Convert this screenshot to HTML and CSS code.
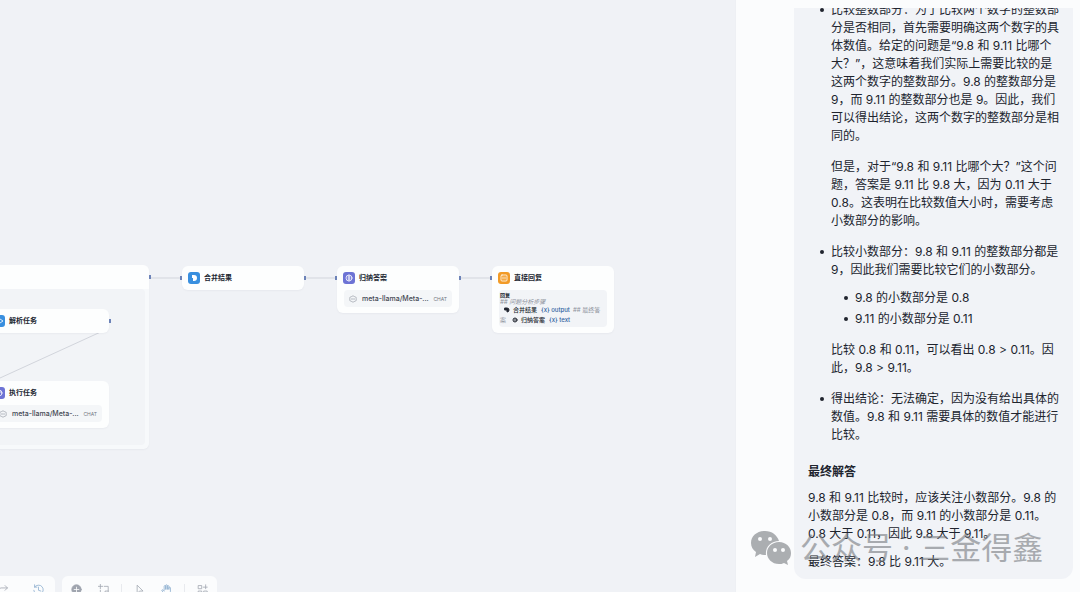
FILE: index.html
```html
<!DOCTYPE html>
<html lang="zh-CN">
<head>
<meta charset="utf-8">
<title>工作流</title>
<link rel="stylesheet" href="styles.css">
</head>
<body>
<div class="app">
  <main class="canvas">
    <svg class="edges" aria-hidden="true">
      <path d="M149 278H182M304 278H337M459 278H492"/>
    </svg>

    <section class="node group">
      <div class="group-body">
        <svg class="edges" aria-hidden="true"><path d="M0 89L105 41"/></svg>
      </div>
      <i class="port out"></i>
    </section>

    <section class="node parse">
      <header class="head">
        <svg class="icon blue" viewBox="0 0 12 12"><path d="M2 6h2l1-2 1 4M7 4l3 2-3 2"/></svg>
        <h2>解析任务</h2>
      </header>
      <i class="port out"></i>
    </section>

    <section class="node execute">
      <header class="head">
        <svg class="icon indigo" viewBox="0 0 12 12"><circle cx="6" cy="6" r="3"/><path d="M6 3v6M4 5h4"/></svg>
        <h2>执行任务</h2>
      </header>
      <div class="model">
        <svg class="cube" viewBox="0 0 10 10"><path d="M5 1l4 2v4L5 9 1 7V3zM3 5h4"/></svg>
        <span class="name">meta-llama/Meta-...</span><span class="tag">CHAT</span>
      </div>
    </section>

    <section class="node merge">
      <header class="head">
        <svg class="icon blue" viewBox="0 0 12 12"><path class="fill" d="M4 3h2a3 3 0 0 1 0 6H5V6H4z"/></svg>
        <h2>合并结果</h2>
      </header>
      <i class="port in"></i><i class="port out"></i>
    </section>

    <section class="node summary">
      <header class="head">
        <svg class="icon indigo" viewBox="0 0 12 12"><circle cx="6" cy="6" r="3"/><path d="M6 3v6M5 5h2M5 7h2"/></svg>
        <h2>归纳答案</h2>
      </header>
      <div class="model">
        <svg class="cube" viewBox="0 0 10 10"><path d="M5 1l4 2v4L5 9 1 7V3zM3 5h4"/></svg>
        <span class="name">meta-llama/Meta-...</span><span class="tag">CHAT</span>
      </div>
      <i class="port in"></i><i class="port out"></i>
    </section>

    <section class="node reply">
      <header class="head">
        <svg class="icon orange" viewBox="0 0 12 12"><rect x="3" y="3" width="6" height="6" rx="1"/><path d="M5 5v2M7 5v2"/></svg>
        <h2>直接回复</h2>
      </header>
      <div class="answer">
        <strong>回复</strong>
        <p class="muted">## 问题分析步骤</p>
        <p class="row indent"><svg class="mini" viewBox="0 0 6 6"><path class="solid" d="M1 1h2a2 2 0 0 1 0 4V3H1z"/></svg><b>合并结果</b><span class="var">{x} output</span><span class="muted">## 最终答</span></p>
        <p class="row"><span class="muted">案</span><svg class="mini gap" viewBox="0 0 6 6"><circle cx="3" cy="3" r="2"/><path d="M3 2v2"/></svg><b>归纳答案</b><span class="var">{x} text</span></p>
      </div>
      <i class="port in"></i>
    </section>

    <div class="toolbar">
      <div class="tools history">
        <button aria-label="重做"><svg viewBox="0 0 14 14"><path d="M1 11V8a3 3 0 0 1 3-3h8M9 2l3 3-3 3"/></svg></button>
        <button aria-label="历史记录"><svg class="hist" viewBox="0 0 14 14"><path d="M2 4a6 6 0 1 1-1 4M2 1v3h3M7 4v4l3 1"/></svg></button>
      </div>
      <div class="tools">
        <button aria-label="添加节点"><svg viewBox="0 0 14 14"><circle class="solid" cx="7" cy="7" r="6"/><path class="plus" d="M7 4v6M4 7h6"/></svg></button>
        <button aria-label="添加注释"><svg viewBox="0 0 14 14"><path d="M3 0v6M0 3h6M8 3h5v7l-3 3H3V8M13 9h-4v4"/></svg></button>
        <span class="sep"></span>
        <button aria-label="指针"><svg viewBox="0 0 14 14"><path d="M4 2v10l3-3h4z"/></svg></button>
        <button class="on" aria-label="手形"><svg viewBox="0 0 14 14"><path d="M4 8V3a1 1 0 0 1 2 0v4V2a1 1 0 0 1 2 0v5-4a1 1 0 0 1 2 0v4-2a1 1 0 0 1 2 0v4c0 3-1 4-4 4S3 12 1 8c0-1 2-1 3 1"/></svg></button>
        <span class="sep"></span>
        <button aria-label="整理"><svg viewBox="0 0 14 14"><path d="M2 2h4v4H2zM2 9h4v4H2zM9 9h4v4H9zM11 1v5M8 4h5"/></svg></button>
      </div>
    </div>
  </main>

  <aside class="chat">
    <div class="scroll">
      <article class="bubble">
        <ul class="steps">
          <li>
            <p>比较整数部分：为了比较两个数字的整数部分是否相同，首先需要明确这两个数字的具体数值。给定的问题是“9.8 和 9.11 比哪个大？”，这意味着我们实际上需要比较的是这两个数字的整数部分。9.8 的整数部分是 9，而 9.11 的整数部分也是 9。因此，我们可以得出结论，这两个数字的整数部分是相同的。</p>
            <p>但是，对于“9.8 和 9.11 比哪个大？”这个问题，答案是 9.11 比 9.8 大，因为 0.11 大于 0.8。这表明在比较数值大小时，需要考虑小数部分的影响。</p>
          </li>
          <li>
            <p>比较小数部分：9.8 和 9.11 的整数部分都是 9，因此我们需要比较它们的小数部分。</p>
            <ul class="sub">
              <li>9.8 的小数部分是 0.8</li>
              <li>9.11 的小数部分是 0.11</li>
            </ul>
            <p>比较 0.8 和 0.11，可以看出 0.8 &gt; 0.11。因此，9.8 &gt; 9.11。</p>
          </li>
          <li>
            <p>得出结论：无法确定，因为没有给出具体的数值。9.8 和 9.11 需要具体的数值才能进行比较。</p>
          </li>
        </ul>
        <h3>最终解答</h3>
        <p>9.8 和 9.11 比较时，应该关注小数部分。9.8 的小数部分是 0.8，而 9.11 的小数部分是 0.11。0.8 大于 0.11，因此 9.8 大于 9.11。</p>
        <p class="final">最终答案：9.8 比 9.11 大。</p>
      </article>
    </div>
    <div class="watermark">
      <svg viewBox="0 0 42 36" aria-hidden="true"><path fill-rule="evenodd" d="M15 1C7 1 1 6 1 13c0 4 2 7 5 9l-1 5 5-3c2 1 4 1 6 1-1-8 5-14 13-14C27 5 22 1 15 1zM10 7a2 2 0 1 1 0 4 2 2 0 0 1 0-4zm10 0a2 2 0 1 1 0 4 2 2 0 0 1 0-4z"/><path fill-rule="evenodd" d="M29 12c-7 0-12 5-12 11s5 11 12 11c2 0 3 0 5-1l4 2-1-4c3-2 4-5 4-8 0-6-5-11-12-11zm-4 6a2 2 0 1 1 0 4 2 2 0 0 1 0-4zm8 0a2 2 0 1 1 0 4 2 2 0 0 1 0-4z"/></svg>
      <span>公众号 · 三金得鑫</span>
    </div>
  </aside>
</div>
</body>
</html>
```
FILE: styles.css
```css
* { box-sizing: border-box; }
body, h2, h3, p, ul { margin: 0; padding: 0; }
body { font-family: Inter, "Noto Sans CJK SC", sans-serif; color: #20242e; background: #f0f2f6; }
svg { fill: none; stroke: currentColor; stroke-linecap: round; stroke-linejoin: round; }

.app { display: flex; height: 100vh; overflow: hidden; }
.canvas { position: relative; flex: 1; min-width: 0; overflow: hidden; background: #f0f2f6; }
.edges { position: absolute; inset: 0; width: 100%; height: 100%; color: #d2d5dc; }

/* workflow nodes */
.node { position: absolute; width: 122px; padding: 6px 7px; border-radius: 6px; background: #fdfefe; box-shadow: 0 1px 2px #1018280a; }
.group { left: -160px; top: 265px; width: 309px; height: 184px; padding: 24px 4px 4px; background: linear-gradient(#fdfefe 24px, #f7f9fb 24px); }
.group-body { position: relative; height: 100%; border-radius: 4px; background: #f2f4f7; }
.group-body .edges { left: 156px; width: 150px; }
.parse { left: -13px; top: 309px; }
.execute { left: -13px; top: 381px; }
.merge { left: 182px; top: 266px; }
.summary { left: 337px; top: 266px; }
.reply { left: 492px; top: 266px; }

.head { display: flex; align-items: center; gap: 4px; height: 12px; margin-left: -1px; }
.head h2 { font-size: 7px; line-height: 12px; font-weight: 700; color: #222731; }
.icon { width: 12px; height: 12px; border-radius: 3px; color: #ffffffcc; stroke-width: 1; }
.blue { background: #398fdf; }
.indigo { background: #6d73d5; }
.orange { background: #f29b27; }
.fill { fill: #fff; stroke: none; }

.port { position: absolute; top: 10px; width: 2px; height: 4px; background: #6d83b8; }
.port.in { left: -2px; }
.port.out { right: -2px; }

.model { display: flex; align-items: center; gap: 4px; height: 17px; margin-top: 6px; padding: 0 5px; border-radius: 4px; background: #f4f6f8; }
.model .cube { width: 8px; height: 8px; margin-right: 1px; color: #a5a9b2; stroke-dasharray: 2 1; }
.name { flex: 1; font-size: 7px; font-weight: 500; white-space: nowrap; color: #434853; }
.tag { font-size: 5px; color: #737882; }

.answer { margin-top: 6px; padding: 2px 1px; border-radius: 4px; background: #f2f4f7; font-size: 6px; line-height: 10px; white-space: nowrap; }
.answer strong { display: block; font-size: 5px; line-height: 6px; }
.answer > .muted { line-height: 7px; font-style: italic; }
.answer .muted { color: #8d929c; }
.row { display: flex; align-items: center; gap: 3px; }
.row b { font-weight: 500; }
.row .var { margin-left: 1px; font-weight: 500; }
.indent { padding-left: 4px; }
.mini { width: 6px; height: 6px; }
.mini.gap { margin-left: 3px; }
.solid { fill: currentColor; }
.var { color: #2f629f; }

/* bottom toolbar */
.toolbar { position: absolute; left: -20px; bottom: -10px; display: flex; gap: 7px; }
.tools { display: flex; align-items: center; gap: 8px; height: 26px; padding: 0 5px; border-radius: 6px; background: #fbfcfd; }
.tools.history { gap: 16px; padding: 0 7px 0 14px; }
.tools button { display: grid; place-items: center; width: 19px; height: 20px; padding: 0; border: 0; background: none; color: #a0a5af; }
.tools svg { width: 11px; height: 11px; }
.tools .hist, .tools .on { color: #8badcf; }
.plus { stroke: #fff; }
.sep { width: 1px; height: 10px; background: #e8eaee; }

/* conversation */
.chat { position: relative; flex: 0 0 345px; padding: 8px 7px 13px 58px; background: #fbfcfd; border-left: 1px solid #eef0f4; }
.scroll { display: flex; flex-direction: column; justify-content: flex-end; height: 100%; overflow: hidden; border-radius: 0 0 12px 12px; }
.bubble { flex: none; padding: 0 14px 8px; background: #f1f3f7; font-size: 12px; line-height: 18px; }
.steps { display: grid; gap: 13px; padding-left: 23px; list-style: none; }
.steps li { position: relative; }
.steps li::before { content: ""; position: absolute; left: -11px; top: 7px; width: 4px; height: 4px; border-radius: 50%; background: #20242e; }
.steps p + p, .sub + p { margin-top: 13px; }
.sub { display: grid; gap: 3px; margin-top: 10px; padding-left: 24px; list-style: none; }
h3 { margin: 19px 0 8px; font-size: 12px; line-height: 18px; font-weight: 700; }
.final { margin-top: 10px; }

.watermark { position: absolute; left: 14px; bottom: 24px; display: flex; align-items: center; gap: 8px; color: #777b80; opacity: .6; font-size: 31px; line-height: 40px; white-space: nowrap; }
.watermark svg { width: 42px; height: 36px; fill: currentColor; stroke: none; }
```
